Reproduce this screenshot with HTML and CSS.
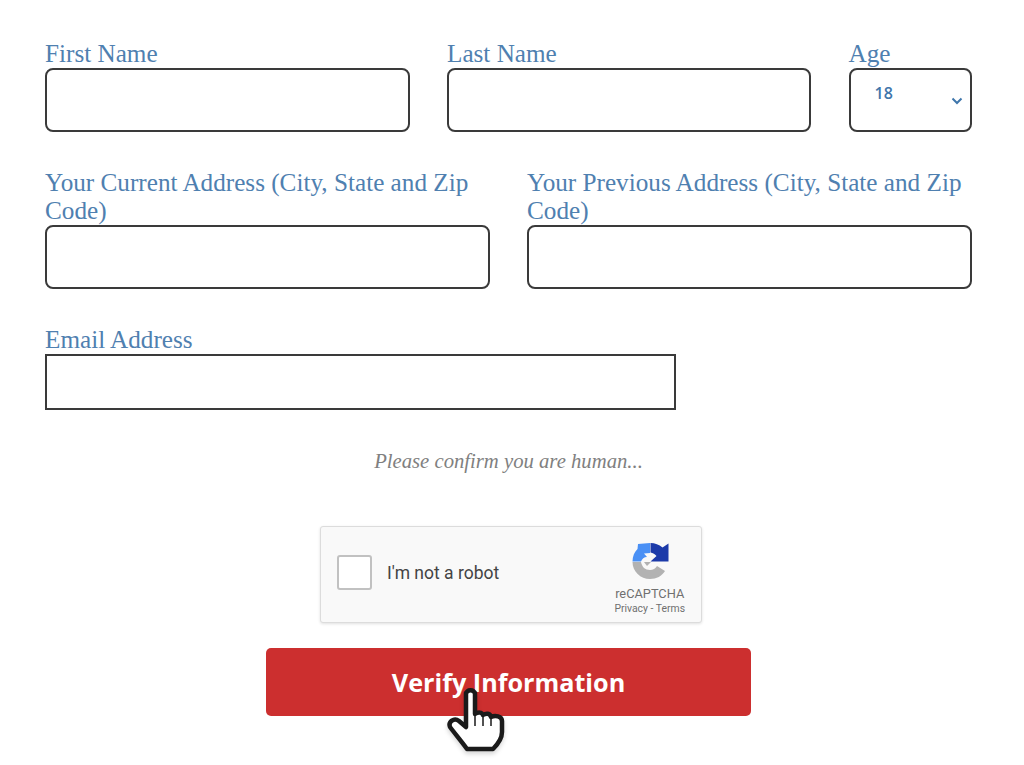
FILE: index.html
```html
<!DOCTYPE html>
<html lang="en">
<head>
  <meta charset="UTF-8" />
  <meta name="viewport" content="width=device-width, initial-scale=1.0" />
  <title>Verify Information</title>
  <link rel="stylesheet" href="styles.css">
</head>
<body>
  <form class="form">
    <div class="row row-names">
      <div class="field">
        <label>First Name</label>
        <div class="box"></div>
      </div>
      <div class="field">
        <label>Last Name</label>
        <div class="box"></div>
      </div>
      <div class="field">
        <label>Age</label>
        <div class="box age-box">
          <span class="age-value">18</span>
          <svg class="chevron" width="12" height="8" viewBox="0 0 12 8"><path d="M1.5 1.5 L6 6 L10.5 1.5" fill="none" stroke="#3f76ab" stroke-width="2"/></svg>
        </div>
      </div>
    </div>

    <div class="row row-address">
      <div class="field">
        <label>Your Current Address (City, State and Zip Code)</label>
        <div class="box"></div>
      </div>
      <div class="field">
        <label>Your Previous Address (City, State and Zip Code)</label>
        <div class="box"></div>
      </div>
    </div>

    <div class="field email-field">
      <label>Email Address</label>
      <div class="box email-box"></div>
    </div>

    <p class="confirm">Please confirm you are human...</p>

    <div class="captcha">
      <div class="captcha-check"></div>
      <span class="captcha-text">I'm not a robot</span>
      <div class="captcha-brand">
        <svg class="captcha-logo" width="40" height="40" viewBox="0 0 40 40">
          <path d="M2.5 19.5 C2.5 14 4.5 10 7.5 7 L8 2 L20 1 V11 L14 11.5 L17 15 C14 15 12 17 11 19.5 Z" fill="#4a90f5"/>
          <path d="M20.5 1 C25 1 29 2.5 32.5 5.5 L38.5 1.5 V19.5 H20.5 L26.5 14 C25 12 23 11 20.5 10.5 Z" fill="#1c3aa9"/>
          <path d="M2.5 20 H11 C12 25 15 28 20 28 C23 28 25.5 26.5 27 24 L35 29 C32 34 26.5 37 20 37 C10.5 37 2.5 29.5 2.5 20 Z" fill="#b2b2b2"/>
          <path d="M14 20 H21 L17 24 Z" fill="#b2b2b2"/>
        </svg>
        <span class="captcha-name">reCAPTCHA</span>
        <span class="captcha-links">Privacy - Terms</span>
      </div>
    </div>

    <button type="button" class="verify-btn">Verify Information</button>

    <svg class="hand" width="60" height="68" viewBox="0 0 60 68">
      <path d="M21 6 C21 1 30 1 30 6 V26 C33 24 37 24 38 27 C41 25 45 25 46 29 C50 27 57 28 57 33 V44 C57 50 53 56 48 61 H22 C17 54 11 47 5 39 C3 34 9 29 14 33 L21 39 Z" fill="#fff" stroke="#1a1a1a" stroke-width="4.5" stroke-linejoin="round"/>
      <path d="M30 27 V38 M38 28 V38 M46 30 V38" fill="none" stroke="#1a1a1a" stroke-width="1.5"/>
    </svg>
  </form>
</body>
</html>
```

FILE: styles.css
```css
* {
  box-sizing: border-box;
  margin: 0;
  padding: 0;
}

body {
  background: #ffffff;
  font-family: 'Liberation Serif', 'Times New Roman', serif;
}

.form {
  position: relative;
  width: 1024px;
  height: 765px;
  padding: 39px 52px 0 45px;
  display: flex;
  flex-direction: column;
}

.row {
  display: grid;
  column-gap: 37.5px;
}

.row-names {
  grid-template-columns: 364.5px 364px 123px;
}

.row-address {
  grid-template-columns: 445px 445px;
  margin-top: 37px;
  column-gap: 37px;
}

.field {
  display: flex;
  flex-direction: column;
  justify-content: flex-end;
}

.field label {
  color: #4f80b0;
  font-size: 25.2px;
  line-height: 28px;
  display: block;
}

.row-names label {
  line-height: 29px;
}

.box {
  height: 64px;
  border: 2px solid #3a3a3a;
  border-radius: 8px;
  background: #ffffff;
}

.age-box {
  display: flex;
  justify-content: space-between;
  padding: 13px 7px 0 24px;
}

.age-value {
  font-family: 'Open Sans', sans-serif;
  font-size: 16px;
  font-weight: 600;
  line-height: 20px;
  color: #3f76ab;
}

.chevron {
  margin-top: 14px;
}

.email-field {
  margin-top: 37px;
  width: 631px;
}

.email-box {
  height: 56px;
  border-radius: 0;
}

.confirm {
  margin-top: 37px;
  text-align: center;
  color: #808080;
  font-size: 20.7px;
  font-style: italic;
  line-height: 28px;
}

.captcha {
  align-self: flex-start;
  margin: 51px 0 0 275px;
  width: 382px;
  height: 97px;
  background: #f9f9f9;
  border: 1px solid #dcdcdc;
  border-radius: 3px;
  box-shadow: 0 1px 3px rgba(0, 0, 0, 0.12);
  display: flex;
  align-items: center;
  padding: 0 16px 4px;
  font-family: Roboto, 'Liberation Sans', sans-serif;
}

.captcha-check {
  width: 35px;
  height: 35px;
  background: #ffffff;
  border: 2px solid #c1c1c1;
  border-radius: 3px;
}

.captcha-text {
  margin-left: 15px;
  font-size: 17.5px;
  color: #444444;
}

.captcha-brand {
  margin-left: auto;
  margin-top: 4px;
  padding-top: 8px;
  display: flex;
  flex-direction: column;
  align-items: center;
  color: #707070;
}

.captcha-logo {
  margin-bottom: 4px;
}

.captcha-name {
  font-size: 12.8px;
  line-height: 16px;
}

.captcha-links {
  font-size: 10.4px;
  line-height: 14px;
}

.verify-btn {
  align-self: flex-start;
  margin: 25px 0 0 221px;
  width: 485px;
  height: 68px;
  background: #cc2f2f;
  border: none;
  border-radius: 5px;
  color: #ffffff;
  font-family: 'Open Sans', sans-serif;
  font-size: 25.2px;
  font-weight: 700;
}

/* mouse pointer sitting over the button */
.hand {
  position: absolute;
  left: 445px;
  top: 688px;
  filter: drop-shadow(0 3px 2px rgba(0, 0, 0, 0.15));
}
```
